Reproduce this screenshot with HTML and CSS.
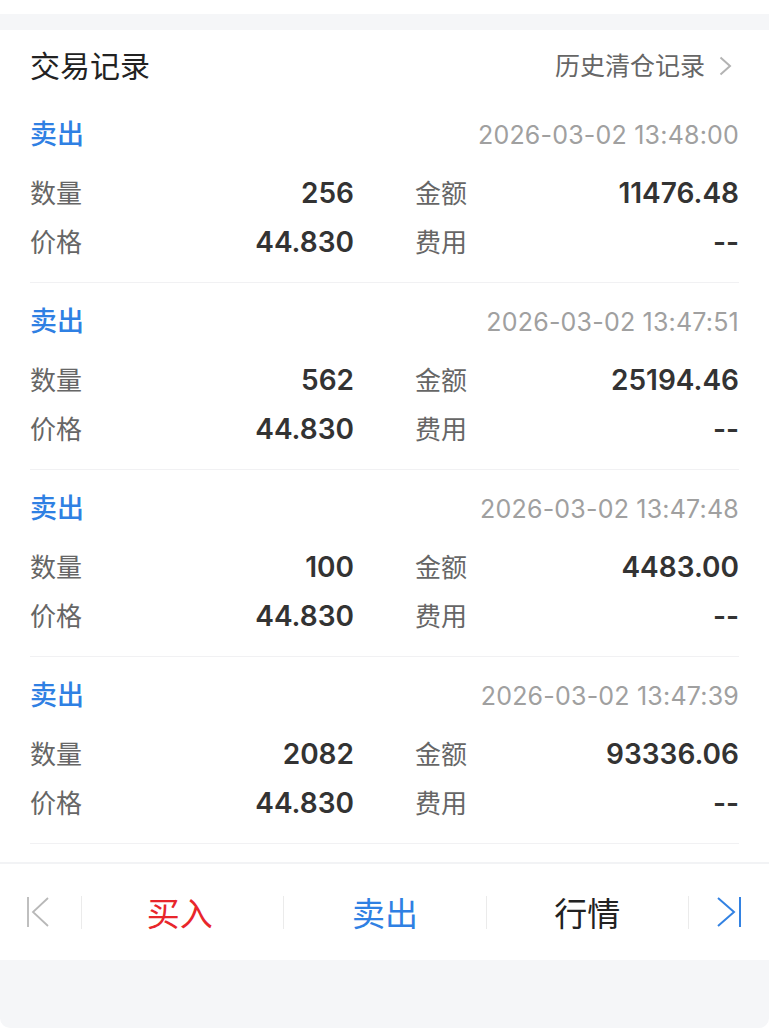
FILE: index.html
```html
<!DOCTYPE html>
<html lang="zh-CN">
<head>
    <meta charset="UTF-8">
    <meta name="viewport" content="width=device-width, initial-scale=1.0">
    <title>交易记录</title>
    <link rel="stylesheet" href="styles.css">
</head>
<body>
    <div class="band"></div>

    <div class="card">
        <div class="title-row">
            <h1>交易记录</h1>
            <a class="history" href="#">历史清仓记录
                <svg width="20" height="20" viewBox="0 0 20 20"><polyline points="1.5,1.5 11,10 1.5,18.5" fill="none" stroke="#b3b3b3" stroke-width="2"/></svg>
            </a>
        </div>

        <div class="record">
            <div class="record-head"><span class="side">卖出</span><span class="time">2026-03-02 13:48:00</span></div>
            <div class="grid">
                <div class="cell"><span class="label">数量</span><span class="value">256</span></div>
                <div class="cell"><span class="label">金额</span><span class="value">11476.48</span></div>
                <div class="cell"><span class="label">价格</span><span class="value">44.830</span></div>
                <div class="cell"><span class="label">费用</span><span class="value">--</span></div>
            </div>
        </div>

        <div class="record">
            <div class="record-head"><span class="side">卖出</span><span class="time">2026-03-02 13:47:51</span></div>
            <div class="grid">
                <div class="cell"><span class="label">数量</span><span class="value">562</span></div>
                <div class="cell"><span class="label">金额</span><span class="value">25194.46</span></div>
                <div class="cell"><span class="label">价格</span><span class="value">44.830</span></div>
                <div class="cell"><span class="label">费用</span><span class="value">--</span></div>
            </div>
        </div>

        <div class="record">
            <div class="record-head"><span class="side">卖出</span><span class="time">2026-03-02 13:47:48</span></div>
            <div class="grid">
                <div class="cell"><span class="label">数量</span><span class="value">100</span></div>
                <div class="cell"><span class="label">金额</span><span class="value">4483.00</span></div>
                <div class="cell"><span class="label">价格</span><span class="value">44.830</span></div>
                <div class="cell"><span class="label">费用</span><span class="value">--</span></div>
            </div>
        </div>

        <div class="record">
            <div class="record-head"><span class="side">卖出</span><span class="time">2026-03-02 13:47:39</span></div>
            <div class="grid">
                <div class="cell"><span class="label">数量</span><span class="value">2082</span></div>
                <div class="cell"><span class="label">金额</span><span class="value">93336.06</span></div>
                <div class="cell"><span class="label">价格</span><span class="value">44.830</span></div>
                <div class="cell"><span class="label">费用</span><span class="value">--</span></div>
            </div>
        </div>
    </div>

    <nav class="bar">
        <div class="tab first">
            <svg width="22" height="30" viewBox="0 0 22 30"><line x1="1" y1="0" x2="1" y2="30" stroke="#b8b8b8" stroke-width="1.8"/><polyline points="21,1 6,15 21,29" fill="none" stroke="#b8b8b8" stroke-width="1.8"/></svg>
        </div>
        <div class="tab"><span class="buy">买入</span></div>
        <div class="tab"><span class="sell">卖出</span></div>
        <div class="tab"><span class="quote">行情</span></div>
        <div class="tab">
            <svg width="24" height="30" viewBox="0 0 24 30"><polyline points="1,1 17,15 1,29" fill="none" stroke="#3382e2" stroke-width="2"/><line x1="23" y1="0" x2="23" y2="30" stroke="#3382e2" stroke-width="2"/></svg>
        </div>
    </nav>

    <div class="bottom"></div>
</body>
</html>
```

FILE: styles.css
```css
body {
    margin: 0;
    padding-top: 14px;
    background-color: #fff;
    font-family: Inter, "Noto Sans CJK SC", sans-serif;
    color: #222;
}

.band {
    height: 16px;
    background-color: #f5f6f8;
}

.card {
    padding: 0 30px 18px 30px;
    background-color: #fff;
    border-bottom: 2px solid #f2f3f5;
}

.title-row {
    display: flex;
    justify-content: space-between;
    align-items: center;
    height: 34px;
    padding: 17px 0 15px 0;
}

h1 {
    margin: 0;
    font-size: 30px;
    font-weight: 400;
    color: #222;
}

.history {
    display: flex;
    align-items: center;
    gap: 14px;
    font-size: 25px;
    color: #666;
    text-decoration: none;
}

.history svg {
    margin-top: 3px;
}

.record {
    padding: 19px 0 16px 0;
    border-bottom: 1px solid #f1f1f3;
}

.record-head {
    display: flex;
    justify-content: space-between;
    align-items: center;
    height: 40px;
    margin-bottom: 13px;
}

.side {
    margin-bottom: 5px;
    font-size: 27px;
    font-weight: 500;
    color: #2f80e3;
}

.time {
    font-size: 25px;
    letter-spacing: 0.2px;
    color: #a0a0a0;
}

.grid {
    display: grid;
    grid-template-columns: 1fr 1fr;
    column-gap: 61px;
}

.cell {
    display: flex;
    justify-content: space-between;
    align-items: center;
    height: 49px;
}

.label {
    margin-bottom: 3px;
    font-size: 26px;
    color: #666;
}

.value {
    font-size: 28px;
    font-weight: 600;
    color: #333;
}

.bar {
    display: grid;
    grid-template-columns: 81px 1fr 1fr 1fr 81px;
    align-items: center;
    height: 96px;
    background-color: #fff;
}

.tab {
    display: flex;
    justify-content: center;
    align-items: center;
    height: 33px;
    border-left: 1px solid #ebebeb;
    font-size: 33px;
}

.tab.first {
    border-left: none;
    justify-content: flex-start;
    padding-left: 27px;
}

.buy {
    margin-right: 6px;
    color: #e8262b;
}

.sell {
    color: #2f80e3;
}

.quote {
    color: #222;
}

.bottom {
    height: 68px;
    background-color: #f5f6f8;
    border-radius: 0 0 10px 10px;
}
```
